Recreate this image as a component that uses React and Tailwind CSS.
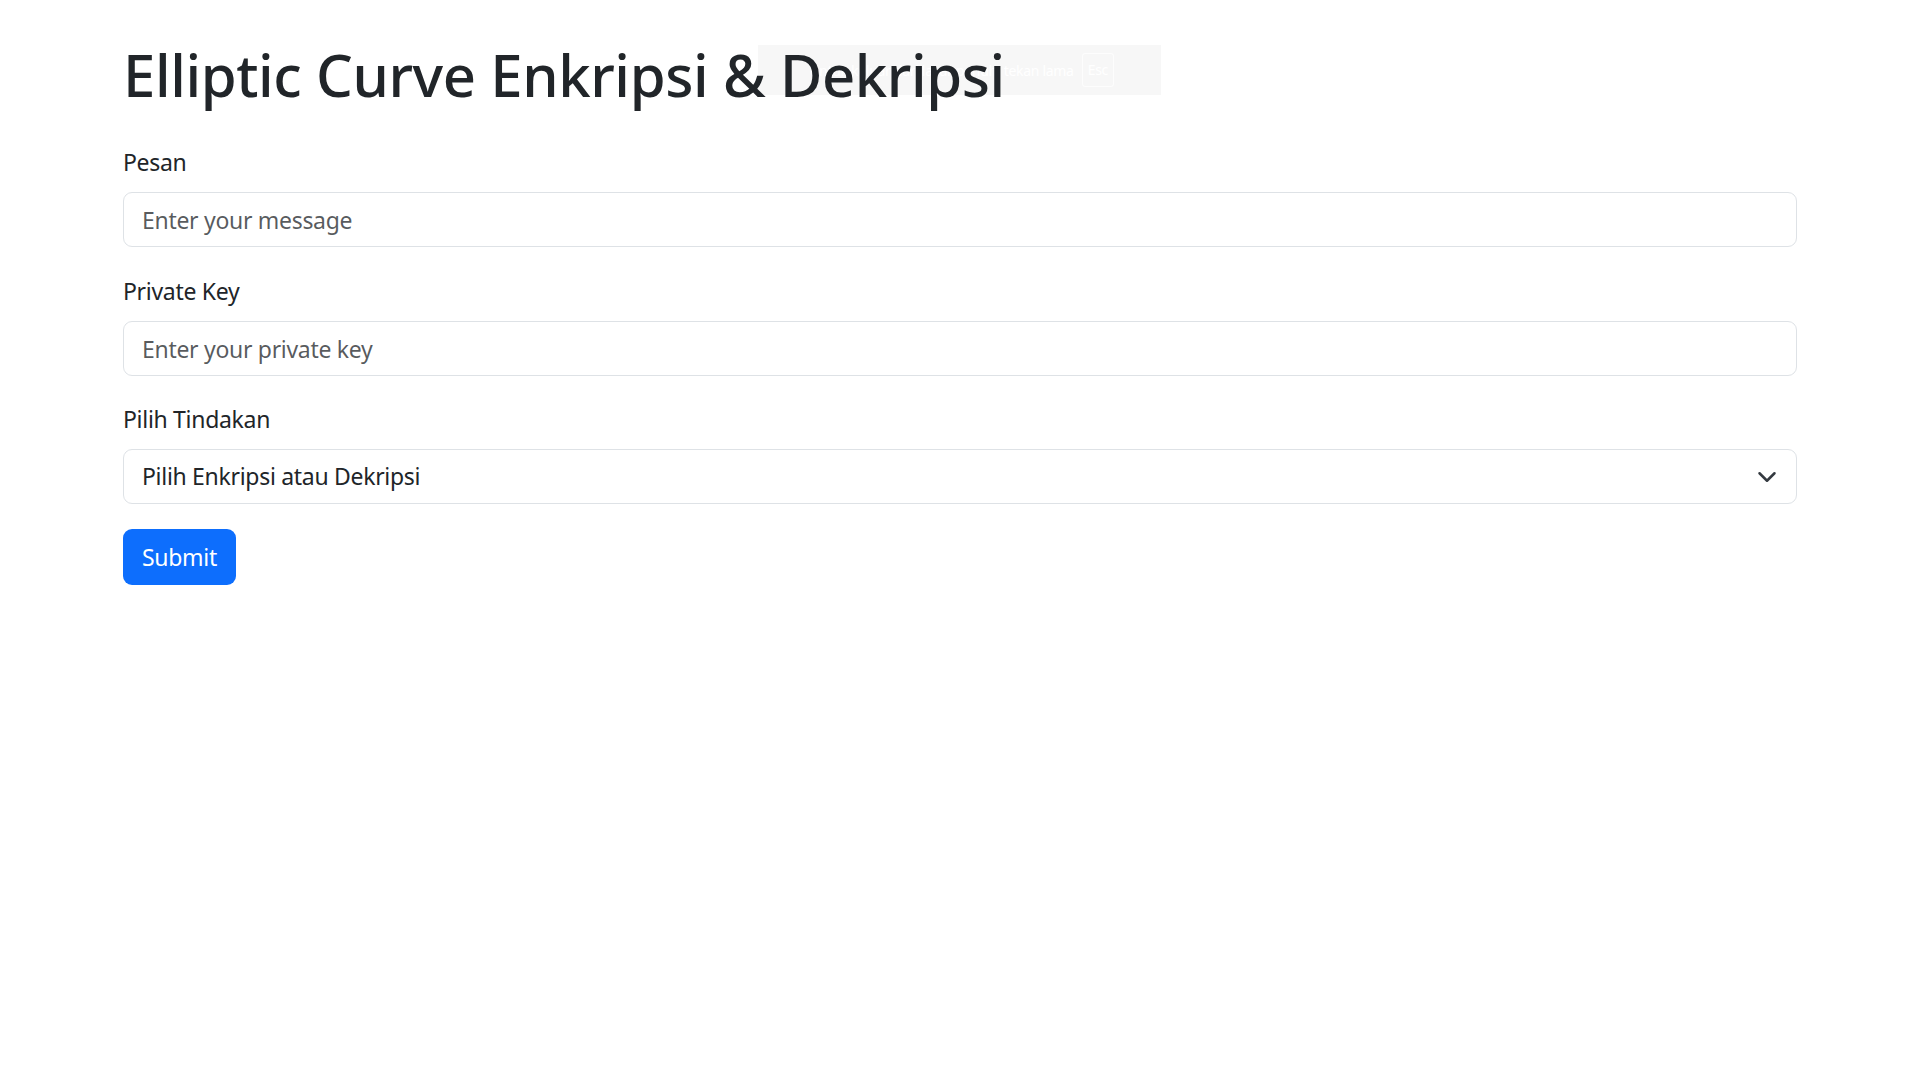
import React, { useState } from 'react';

function Field({ label, children, className = '' }) {
  return (
    <div className={className}>
      <label className="block text-[23px] tracking-[-0.3px] leading-[36px] mb-[12px]">{label}</label>
      {children}
    </div>
  );
}

export default function App() {
  const [form, setForm] = useState({ message: '', privateKey: '', action: '' });

  const inputCls =
    'block w-full h-[55px] px-[18px] text-[23px] tracking-[-0.3px] text-[#212529] bg-white border border-[#dee2e6] rounded-[9px] outline-none placeholder:text-[#212529bf]';

  return (
    <div className="relative min-h-screen bg-white px-[123px] pt-[39px] text-[#212529] font-['Segoe_UI','Noto_Sans',sans-serif]">
      {/* fading fullscreen notice, sits behind the heading */}
      <div className="absolute left-[758px] top-[45px] w-[403px] h-[50px] bg-black/[0.03] flex items-center justify-end pr-[47px] gap-[8px] pointer-events-none text-white text-[14px] tracking-[-0.3px] whitespace-nowrap">
        <span>Untuk keluar dari layar penuh, tekan lama</span>
        <span className="border border-white/80 rounded-[3px] px-[5px] leading-[32px]">Esc</span>
      </div>

      <h1 className="relative text-[58px] tracking-[-0.4px] leading-[72px] font-medium mb-[33px]">
        Elliptic Curve Enkripsi &amp; Dekripsi
      </h1>

      <form onSubmit={e => e.preventDefault()}>
        <Field label="Pesan" className="mb-[26px]">
          <input
            className={inputCls}
            placeholder="Enter your message"
            value={form.message}
            onChange={e => setForm(f => ({ ...f, message: e.target.value }))}
          />
        </Field>

        <Field label="Private Key" className="mb-[25px]">
          <input
            className={inputCls}
            placeholder="Enter your private key"
            value={form.privateKey}
            onChange={e => setForm(f => ({ ...f, privateKey: e.target.value }))}
          />
        </Field>

        <Field label="Pilih Tindakan" className="mb-[25px]">
          <div className="relative">
            <select
              className={inputCls + ' appearance-none pr-[54px]'}
              value={form.action}
              onChange={e => setForm(f => ({ ...f, action: e.target.value }))}
            >
              <option value="">Pilih Enkripsi atau Dekripsi</option>
              <option value="encrypt">Enkripsi</option>
              <option value="decrypt">Dekripsi</option>
            </select>
            {/* select chevron */}
            <svg
              className="absolute right-[20px] top-1/2 -translate-y-1/2 w-[20px] h-[20px] pointer-events-none"
              viewBox="0 0 16 16"
              fill="none"
              stroke="#343a40"
              strokeWidth="2"
              strokeLinecap="round"
              strokeLinejoin="round"
            >
              <path d="m2 5 6 6 6-6" />
            </svg>
          </div>
        </Field>

        <button
          type="submit"
          className="h-[56px] px-[19px] text-[23px] tracking-[-0.3px] text-white bg-[#0d6efd] rounded-[9px]"
        >
          Submit
        </button>
      </form>
    </div>
  );
}
